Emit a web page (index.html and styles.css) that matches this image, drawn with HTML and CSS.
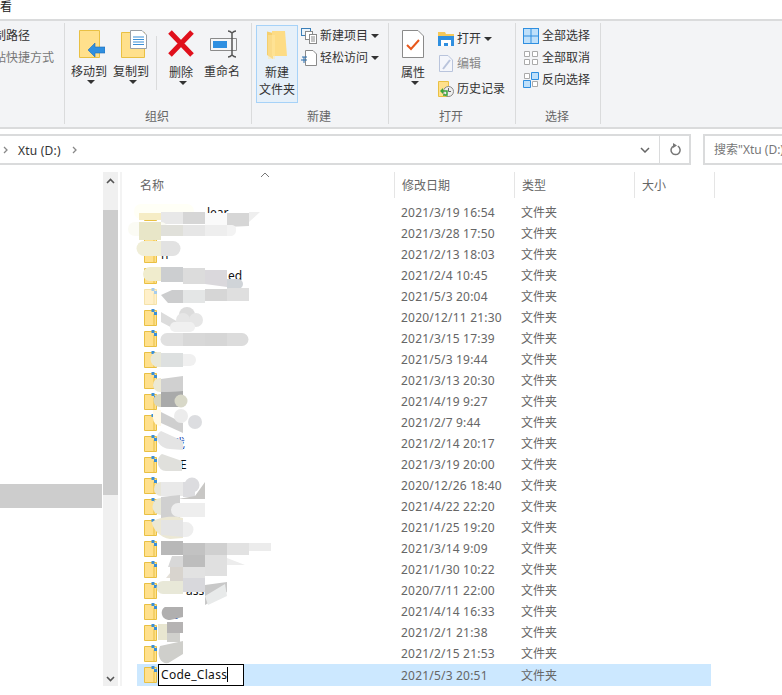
FILE: index.html
```html
<!DOCTYPE html>
<html lang="zh-CN">
<head>
<meta charset="utf-8">
<title>Xtu (D:)</title>
<link rel="stylesheet" href="styles.css">
</head>
<body>
<svg class="defs" width="0" height="0" aria-hidden="true">
  <symbol id="sf" viewBox="0 0 16 18">
    <path d="M1.500 1.500H13.500V16.500H1.500Z" fill="#ffe08c" stroke="#e9c043"/>
    <path d="M11 5V16" stroke="#e9c043"/>
    <rect x="8.500" y="0" width="3" height="3" fill="#3b8fd6"/>
    <rect x="11" y="3" width="3" height="3" fill="#3b8fd6"/>
  </symbol>
</svg>
<div class="page">
  <div class="tabs"><span class="tab-cut">查看</span></div>
  <div class="ribbon">
    <section class="group g-clip">
      <div class="clip-lines">
        <span class="clip-a">复制路径</span>
        <span class="clip-b">粘贴快捷方式</span>
      </div>
      <div class="g-label"></div>
    </section>
    <section class="group g-org">
      <div class="g-body">
        <button class="big w-40">
          <svg class="ico-big" width="32" height="28" viewBox="0 0 32 28"><path d="M6.500 .5H26.500V27.500H6.500Z" fill="#ffe08c" stroke="#e9c043"/><path d="M15 20L22 13V17H32V23H22V27Z" fill="#2f8fe0" stroke="#1e6db5" stroke-width=".6"/></svg>
          <span class="big-t">移动到</span><i class="caret"></i>
        </button>
        <button class="big w-40 ml-2">
          <svg class="ico-big" width="32" height="28" viewBox="0 0 32 28"><path d="M6.500 2.500H29.500V27.500H6.500Z" fill="#ffe08c" stroke="#e9c043"/><path d="M15.500 .5H27L31.500 5V18.500H15.500Z" fill="#fff" stroke="#9aa0a6"/><path d="M18 7H29M18 9.500H29M18 12H29M18 14.500H29" stroke="#3b8fd6"/></svg>
          <span class="big-t">复制到</span><i class="caret"></i>
        </button>
        <i class="vsep"></i>
        <button class="big w-40">
          <svg class="ico-big" width="28" height="28" viewBox="0 0 28 28"><path d="M3 2L25 25M25 2L3 25" stroke="#e0101c" stroke-width="5"/></svg>
          <span class="big-t t-low">删除</span><i class="caret"></i>
        </button>
        <button class="big w-42">
          <svg class="ico-big ico-shift" width="30" height="28" viewBox="0 0 30 28"><path d="M1.500 8.500H27.500V20.500H1.500Z" fill="#f5f6f7" stroke="#8a8a8a"/><rect x="4" y="11" width="14" height="7" fill="#2f8fe0"/><path d="M19 1C21 1 22 2 23 3C24 2 25 1 27 1M23 3V25M19 27C21 27 22 26 23 25C24 26 25 27 27 27" fill="none" stroke="#555" stroke-width="1.500"/></svg>
          <span class="big-t">重命名</span>
        </button>
      </div>
      <div class="g-label">组织</div>
    </section>
    <section class="group g-new">
      <div class="g-body">
        <button class="big new-btn">
          <svg class="ico-big" width="20" height="28" viewBox="0 0 20 28"><path d="M0 0.500L6 2V28L0 24Z" fill="#f5cf6e"/><path d="M5 0H18L20 25H5Z" fill="#fddc85"/><path d="M1 4H8V28H1Z" fill="#ffe7a3" opacity=".5"/></svg>
          <span class="big-t">新建<br>文件夹</span>
        </button>
        <div class="small-col">
          <div class="small"><svg width="16" height="16" viewBox="0 0 16 16"><rect x=".5" y=".5" width="9" height="7" fill="#eaf3fb" stroke="#3b7fb8"/><rect x="4.500" y="3.500" width="7" height="8" fill="#fff" stroke="#8a8a8a"/><rect x="8.500" y="6.500" width="7" height="9" fill="#fff" stroke="#8a8a8a"/><path d="M10 9H14M10 11H14M10 13H14" stroke="#8a8a8a"/></svg><span>新建项目</span><i class="caret c-inline"></i></div>
          <div class="small"><svg width="16" height="16" viewBox="0 0 16 16"><path d="M4.500 .5H12L15.500 4V15.500H4.500Z" fill="#fff" stroke="#8a8a8a"/><path d="M1 7H6M0 10H6M3 7V13" stroke="#2b6fad" fill="none"/></svg><span>轻松访问</span><i class="caret c-inline"></i></div>
        </div>
      </div>
      <div class="g-label">新建</div>
    </section>
    <section class="group g-open">
      <div class="g-body">
        <button class="big w-42">
          <svg class="ico-big" width="22" height="28" viewBox="0 0 22 28"><path d="M.5 .5H16L21.500 6V27.500H.5Z" fill="#fff" stroke="#8a8a8a"/><path d="M5 15L9 19L17 10" fill="none" stroke="#e8581c" stroke-width="2"/></svg>
          <span class="big-t t-low">属性</span><i class="caret"></i>
        </button>
        <div class="small-col open-col">
          <div class="small"><svg width="16" height="16" viewBox="0 0 16 16"><path d="M0 1H7L8 3H16V15H0Z" fill="#f6c858"/><path d="M0 5H16V15H0Z" fill="#2f8fe0"/><path d="M3 15V9H13V15H10V12H6V15Z" fill="#fff"/></svg><span>打开</span><i class="caret c-inline"></i></div>
          <div class="small dim"><svg width="16" height="18" viewBox="0 0 16 18"><path d="M1.500 .5H10L14.500 5V16.500H1.500Z" fill="#f4f6fb" stroke="#b9c4dc"/><path d="M5 14L12 5" stroke="#b9c4dc" stroke-width="2"/></svg><span>编辑</span></div>
          <div class="small"><svg width="16" height="16" viewBox="0 0 16 16"><path d="M.5 .5H10.500V15.500H.5Z" fill="#ffe08c" stroke="#e9c043"/><circle cx="10.500" cy="10.500" r="5" fill="#eee" stroke="#888"/><path d="M10.500 7V10.500H13" fill="none" stroke="#666"/><path d="M2 10L5 7V13Z" fill="#3aa53a"/><path d="M4 10H9V14H5" fill="none" stroke="#3aa53a" stroke-width="1.500"/></svg><span>历史记录</span></div>
        </div>
      </div>
      <div class="g-label">打开</div>
    </section>
    <section class="group g-sel">
      <div class="g-body">
        <div class="small-col sel-col">
          <div class="small"><svg width="16" height="16" viewBox="0 0 16 16"><rect width="16" height="16" fill="#2f8fe0"/><path d="M1 1H7.500V7.500H1ZM8.500 1H15V7.500H8.500ZM1 8.500H7.500V15H1ZM8.500 8.500H15V15H8.500Z" fill="#bfe0fa"/></svg><span>全部选择</span></div>
          <div class="small"><svg width="16" height="16" viewBox="0 0 16 16"><path d="M1.500 1.500H6.500V6.500H1.500ZM9.500 1.500H14.500V6.500H9.500ZM1.500 9.500H6.500V14.500H1.500ZM9.500 9.500H14.500V14.500H9.500Z" fill="#fff" stroke="#aaa"/></svg><span>全部取消</span></div>
          <div class="small"><svg width="16" height="16" viewBox="0 0 16 16"><path d="M1.500 1.500H6.500V6.500H1.500ZM9.500 9.500H14.500V14.500H9.500Z" fill="#fff" stroke="#aaa"/><path d="M8.500 .5H15.500V7.500H8.500ZM.5 8.500H7.500V15.500H.5Z" fill="#bfe0fa" stroke="#2f8fe0"/></svg><span>反向选择</span></div>
        </div>
      </div>
      <div class="g-label">选择</div>
    </section>
  </div>

  <div class="address">
    <div class="addr-box">
      <svg class="chev" width="5" height="8" viewBox="0 0 5 8"><path d="M1 1L4 4L1 7" fill="none" stroke="#888" stroke-width="1.300"/></svg>
      <span class="addr-t">Xtu (D:)</span>
      <svg class="chev" width="5" height="8" viewBox="0 0 5 8"><path d="M1 1L4 4L1 7" fill="none" stroke="#888" stroke-width="1.300"/></svg>
      <svg class="addr-down" width="10" height="6" viewBox="0 0 10 6"><path d="M1 1L5 5L9 1" fill="none" stroke="#666" stroke-width="1.500"/></svg>
      <span class="addr-refresh"><svg width="12" height="13" viewBox="0 0 12 13"><path d="M7.800 3.200A4.500 4.500 0 1 1 4 2.900" fill="none" stroke="#777" stroke-width="1.500"/><path d="M3 0V5L7 2.500Z" fill="#777"/></svg></span>
    </div>
    <div class="search">搜索"Xtu (D:)"</div>
  </div>

  <div class="main">
    <nav class="nav"><div class="nav-sel"></div></nav>
    <div class="vbar">
      <svg class="arrow" width="9" height="6" viewBox="0 0 9 6"><path d="M1 5L4.500 1.500L8 5" fill="none" stroke="#555" stroke-width="1.600"/></svg>
      <div class="vthumb"></div>
      <div class="vfill"></div>
      <svg class="arrow" width="9" height="6" viewBox="0 0 9 6"><path d="M1 1L4.500 4.500L8 1" fill="none" stroke="#555" stroke-width="1.600"/></svg>
    </div>
    <div class="vline"></div>
    <div class="files">
      <div class="head">
        <div class="h-cell h-name">名称<svg class="sort" width="10" height="6" viewBox="0 0 10 6"><path d="M1 5L5 1L9 5" fill="none" stroke="#777"/></svg></div>
        <div class="h-cell">修改日期</div>
        <div class="h-cell">类型</div>
        <div class="h-cell h-size">大小</div>
      </div>
      <div class="rows">
        <div class="row"><span class="n"><svg class="fi"><use href="#sf"/></svg><b class="o46">lear</b></span><span class="d">2021/3/19 16:54</span><span>文件夹</span></div>
        <div class="row"><span class="n"><svg class="fi"><use href="#sf"/></svg></span><span class="d">2021/3/28 17:50</span><span>文件夹</span></div>
        <div class="row"><span class="n"><svg class="fi"><use href="#sf"/></svg><b>n</b></span><span class="d">2021/2/13 18:03</span><span>文件夹</span></div>
        <div class="row"><span class="n"><svg class="fi"><use href="#sf"/></svg><b class="o67">ed</b></span><span class="d">2021/2/4 10:45</span><span>文件夹</span></div>
        <div class="row"><span class="n"><svg class="fi faded"><use href="#sf"/></svg></span><span class="d">2021/5/3 20:04</span><span>文件夹</span></div>
        <div class="row"><span class="n"><svg class="fi"><use href="#sf"/></svg></span><span class="d">2020/12/11 21:30</span><span>文件夹</span></div>
        <div class="row"><span class="n"><svg class="fi"><use href="#sf"/></svg></span><span class="d">2021/3/15 17:39</span><span>文件夹</span></div>
        <div class="row"><span class="n"><svg class="fi"><use href="#sf"/></svg></span><span class="d">2021/5/3 19:44</span><span>文件夹</span></div>
        <div class="row"><span class="n"><svg class="fi"><use href="#sf"/></svg></span><span class="d">2021/3/13 20:30</span><span>文件夹</span></div>
        <div class="row"><span class="n"><svg class="fi"><use href="#sf"/></svg></span><span class="d">2021/4/19 9:27</span><span>文件夹</span></div>
        <div class="row"><span class="n"><svg class="fi"><use href="#sf"/></svg></span><span class="d">2021/2/7 9:44</span><span>文件夹</span></div>
        <div class="row"><span class="n"><svg class="fi"><use href="#sf"/></svg><b class="o12 blue">戏</b></span><span class="d">2021/2/14 20:17</span><span>文件夹</span></div>
        <div class="row"><span class="n"><svg class="fi"><use href="#sf"/></svg><b class="o19">E</b></span><span class="d">2021/3/19 20:00</span><span>文件夹</span></div>
        <div class="row"><span class="n"><svg class="fi"><use href="#sf"/></svg></span><span class="d">2020/12/26 18:40</span><span>文件夹</span></div>
        <div class="row"><span class="n"><svg class="fi"><use href="#sf"/></svg><b class="o7">+</b></span><span class="d">2021/4/22 22:20</span><span>文件夹</span></div>
        <div class="row"><span class="n"><svg class="fi"><use href="#sf"/></svg></span><span class="d">2021/1/25 19:20</span><span>文件夹</span></div>
        <div class="row"><span class="n"><svg class="fi"><use href="#sf"/></svg></span><span class="d">2021/3/14 9:09</span><span>文件夹</span></div>
        <div class="row"><span class="n"><svg class="fi"><use href="#sf"/></svg></span><span class="d">2021/1/30 10:22</span><span>文件夹</span></div>
        <div class="row"><span class="n"><svg class="fi"><use href="#sf"/></svg><b class="o25">ass</b></span><span class="d">2020/7/11 22:00</span><span>文件夹</span></div>
        <div class="row"><span class="n"><svg class="fi"><use href="#sf"/></svg><b class="o14 blue">y</b></span><span class="d">2021/4/14 16:33</span><span>文件夹</span></div>
        <div class="row"><span class="n"><svg class="fi plain"><use href="#sf"/></svg></span><span class="d">2021/2/1 21:38</span><span>文件夹</span></div>
        <div class="row"><span class="n"><svg class="fi"><use href="#sf"/></svg></span><span class="d">2021/2/15 21:53</span><span>文件夹</span></div>
        <div class="row row-sel"><span class="n"><svg class="fi"><use href="#sf"/></svg><span class="rename">Code_Class</span></span><span class="d">2021/5/3 20:51</span><span>文件夹</span></div>
      </div>
    </div>
  </div>

  <svg class="smudges" width="782" height="695" viewBox="0 0 782 695" aria-hidden="true">
    <g>
      <rect x="134" y="204" width="60" height="15" rx="7" fill="#fffff6"/>
      <rect x="139" y="213" width="22" height="7" fill="#f6edc6"/>
      <path d="M161 212H183V224H161Z" fill="#e8e8e8"/><path d="M183 212H205V224H183Z" fill="#d6d6d6"/><path d="M205 213H227V226H205Z" fill="#fafafa"/><path d="M227 213H249V226L227 227Z" fill="#d6d6d6"/><path d="M249 212H260L249 222Z" fill="#efefef"/>
      <rect x="128" y="222" width="40" height="14" rx="7" fill="#fbfbf4"/>
      <path d="M139 222H161V240H139Z" fill="#e8e6c8"/><path d="M161 225H183V236H161Z" fill="#e0e0da"/><path d="M183 225H205V236H183Z" fill="#e6e6e6"/><path d="M205 225H227V236H205Z" fill="#eeeeee"/><path d="M227 225H232A4 4 0 0 1 236 230A6 6 0 0 1 232 236H227Z" fill="#f3f3f3"/>
      <path d="M144 241H161V256H144A7 7 0 0 1 144 241Z" fill="#f0eed8"/><path d="M161 241H173A7.500 7.500 0 0 1 173 256H161Z" fill="#e2e2e2"/>
      <path d="M150 267H161V281H150A7 7 0 0 1 150 267Z" fill="#f0eccd"/><path d="M161 267H183V282H161Z" fill="#ccced0"/><path d="M183 268H205V284H183Z" fill="#dcdcdc"/><path d="M205 270H227V287L205 284Z" fill="#dad8dc"/><path d="M227 279L238 279A5 5 0 0 1 238 289L227 288Z" fill="#d0d4d8"/>
      <path d="M161 295L172 290H183V303H168Z" fill="#cccdce"/><path d="M183 290H205V303H183Z" fill="#e4e6e6"/><path d="M205 289H227V301H205Z" fill="#d6d6d6"/><path d="M227 288H249V301H227Z" fill="#dfdfdf"/>
      <path d="M161 312L178 322V331L161 322Z" fill="#dcdcdc"/><circle cx="187" cy="315" r="8" fill="#dcdcdc"/><circle cx="196" cy="320" r="7" fill="#e6e6e6"/><circle cx="183" cy="320" r="7" fill="#e6e6e6"/><rect x="170" y="322" width="25" height="10" rx="5" fill="#f0f0f0"/>
      <path d="M167 333H183V346H167A6.500 6.500 0 0 1 167 333Z" fill="#e0e0e0"/><path d="M183 333H205V346H183Z" fill="#d8d8d8"/><path d="M205 333H227V346H205Z" fill="#d6d6d6"/><path d="M227 333H242A6.500 6.500 0 0 1 242 346H227Z" fill="#dcdcdc"/>
      <path d="M158 352H161V367H158A7.500 7.500 0 0 1 158 352Z" fill="#e8e8d8"/><path d="M161 353H183V367H161Z" fill="#dde0e0"/><path d="M183 354H190A6 6 0 0 1 190 366H183Z" fill="#f0f0f0"/>
      <path d="M160 378H161V392H160A7 7 0 0 1 160 378Z" fill="#ece9d5"/><path d="M161 379L183 376V391L161 392Z" fill="#d0d0d0"/>
      <path d="M160 394H161V407H160A6.500 6.500 0 0 1 160 394Z" fill="#d8d6c0"/><path d="M161 392L183 391V407H161Z" fill="#a9aaaa"/><circle cx="181" cy="401" r="6.500" fill="#d8d8c8"/>
      <path d="M153 410H161V426A8 8 0 0 1 153 418Z" fill="#fff9e6"/><path d="M161 412L183 423V433L161 423Z" fill="#cfcfcf"/><circle cx="181" cy="416" r="7" fill="#ececec"/><circle cx="195" cy="422" r="7" fill="#dcdde0"/>
      <path d="M161 431L183 441V450L170 449C160 449 152 437 161 431Z" fill="#e4e4e4"/>
      <path d="M162 454L182 461V471H166C157 471 155 458 162 454Z" fill="#e0e0dc"/>
      <path d="M161 482V496A7 7 0 0 1 161 482Z" fill="#e8e6d8"/><path d="M161 482H183V496H161Z" fill="#e9e9e9"/><path d="M183 482H195V497H183Z" fill="#dcdcdf"/><circle cx="192" cy="485" r="7.500" fill="#dcdcdf"/><path d="M195 496L205 482V499H178Z" fill="#c8c7c5"/>
      <path d="M161 498V515A8 8 0 0 1 161 498Z" fill="#e8e8d8"/><path d="M161 497L180 495V518L161 518Z" fill="#d0d0d0"/><path d="M178 503H205V517H178A7 7 0 0 1 178 503Z" fill="#eeeeee"/>
      <path d="M152 522C160 516 175 516 183 518V538L170 539C160 538 152 528 152 522Z" fill="#ece8d4"/><path d="M161 520H183V537L161 535Z" fill="#e4e4e4"/><path d="M183 522H186A6 6 0 0 1 186 537H183Z" fill="#eeeeee"/>
      <path d="M166 541H161V555H166Z" fill="#d9d9d2"/><path d="M161 541H183V555H161Z" fill="#b8b8b8"/><path d="M183 543H205V555H183Z" fill="#c2c2c2"/><path d="M205 543H227V555H205Z" fill="#d0d0d0"/><path d="M227 543H249V555H227Z" fill="#e2e2e2"/><path d="M249 543H271V551H249Z" fill="#ececec"/>
      <path d="M172 556H183V567H168Z" fill="#d8d8d8"/><path d="M183 555H205V567H183Z" fill="#bdbdbd"/><path d="M205 555H227V575H205Z" fill="#e0e0e0"/><path d="M227 558L245 565H227Z" fill="#ededed"/>
      <path d="M175 567H183V578H166Z" fill="#e4e0d8"/><path d="M170 567H183V582H170Z" fill="#d8d4ce"/><path d="M183 567H205V580H183Z" fill="#e2e2e2"/><path d="M205 567H227V576H205Z" fill="#e0e0e0"/>
      <path d="M163 581H183V594H163A6.500 6.500 0 0 1 163 581Z" fill="#e8e8d8"/><path d="M183 578H205V592H183Z" fill="#d8d8dc"/><path d="M205 585L227 582V592L205 605Z" fill="#c8c8c8"/><path d="M205 596L225 584L227 596L208 605Z" fill="#e8eaea"/>
      <path d="M165 607H183V617L170 620C160 620 160 609 165 607Z" fill="#b0afaf"/>
      <path d="M167 622H183V633H167Z" fill="#b5b3b3"/><path d="M158 624H167V640H158Z" fill="#e8e6d0"/><path d="M167 633H180V642H167Z" fill="#d0d0cc"/>
      <path d="M160 646L183 641V654L170 662C165 666 155 660 160 646Z" fill="#cfcfcb"/>
    </g>
  </svg>
</div>
</body>
</html>
```
FILE: styles.css
```css
* { box-sizing: border-box; }
html, body { margin: 0; padding: 0; }
body {
  width: 782px;
  height: 695px;
  overflow: hidden;
  background: #fff;
  color: #444;
  font: 12px/17px "Noto Sans", "Noto Sans CJK SC", sans-serif;
}
.defs { position: absolute; }
.page { position: relative; width: 782px; height: 695px; overflow: hidden; }

.tabs { height: 21px; border-bottom: 2px solid #dadbdc; overflow: hidden; }
.tab-cut { display: block; margin: -2px 0 0 -4px; color: #222; width: 30px; text-indent: -8px; line-height: 17px; }

.ribbon {
  display: flex;
  height: 108px;
  padding: 2px 0 3px;
  background: #f3f4f6;
  border-bottom: 2px solid #dadbdc;
}
.group {
  display: flex;
  flex-direction: column;
  flex: none;
  border-right: 1px solid #dadbdc;
  overflow: hidden;
}
.g-clip { width: 65px; }
.g-org { width: 187px; }
.g-new { width: 137px; }
.g-open { width: 127px; }
.g-sel { width: 85px; }
.g-body { display: flex; height: 84px; flex: none; }
.g-label { height: 18px; padding: 1px 2px 0 0; text-align: center; color: #666; }
.g-clip .g-label { visibility: hidden; }

.clip-lines { display: flex; flex-direction: column; gap: 5px; height: 84px; padding-top: 4px; margin-left: -18px; }
.clip-a { color: #333; white-space: nowrap; }
.clip-b { color: #777; white-space: nowrap; }

.big {
  display: flex;
  flex-direction: column;
  align-items: center;
  padding: 7px 0 0;
  margin: 0;
  border: 0;
  background: none;
  font: inherit;
  color: #333;
  flex: none;
}
.w-40 { width: 40px; }
.w-42 { width: 42px; }
.ml-2 { margin-left: 2px; }
.g-org .g-body { padding-left: 4px; }
.g-open .g-body { padding-left: 3px; }
.ico-big { display: block; flex: none; }
.ico-shift { margin-left: 4px; }
.big-t { margin-top: 5px; }
.t-low { margin-top: 6px; }
.caret {
  display: block;
  width: 0;
  height: 0;
  margin: 0 0 0 4px;
  border: 4px solid transparent;
  border-top-color: #333;
  border-bottom: 0;
}
.c-inline { margin: 0; }
.vsep { width: 1px; height: 54px; margin: 13px 4px 0 5px; background: #dadbdc; flex: none; }

.new-btn {
  width: 42px;
  height: 78px;
  margin: 2px 0 0 4px;
  padding-top: 5px;
  background: #e6f0f9;
  border: 1px solid #a6d2f8;
}
.new-btn .big-t { margin-top: 5px; }
.small-col { display: flex; flex-direction: column; gap: 5px; padding: 4px 0 0 3px; }
.small { display: flex; align-items: center; height: 17px; gap: 3px; color: #333; white-space: nowrap; }
.small svg { flex: none; }
.dim { color: #888; }
.open-col { gap: 8px; padding: 7px 0 0 4px; }
.sel-col { padding: 4px 0 0 7px; }

.address { display: flex; height: 31px; margin-top: 5px; }
.addr-box {
  display: flex;
  align-items: center;
  width: 691px;
  height: 31px;
  padding-left: 3px;
  border: 2px solid #dadbdc;
  border-left: 0;
  color: #333;
  flex: none;
}
.addr-t { margin: 1px 11px 0 10px; letter-spacing: .2px; }
.addr-down { margin-left: auto; }
.addr-refresh {
  display: flex;
  align-items: center;
  justify-content: center;
  width: 30px;
  height: 100%;
  margin-left: 9px;
  padding-left: 3px;
  border-left: 1px solid #dadbdc;
}
.search {
  flex: none;
  width: 79px;
  height: 31px;
  margin-left: 12px;
  padding: 5px 0 0 9px;
  border: 2px solid #dadbdc;
  border-right: 0;
  color: #777;
  white-space: nowrap;
  overflow: hidden;
}

.main { display: flex; height: 530px; }
.nav { width: 103px; flex: none; padding-top: 319px; }
.nav-sel { width: 102px; height: 24px; background: #cdcdcd; }
.vbar {
  display: flex;
  flex-direction: column;
  align-items: center;
  width: 15px;
  height: 514px;
  margin-top: 7px;
  background: #f0f0f0;
  flex: none;
}
.arrow { flex: none; margin: 6px 0 4px; }
.vthumb { align-self: stretch; height: 285px; margin-top: 22px; background: #cdcdcd; }
.vfill { flex: 1; }
.vline { width: 2px; height: 514px; margin: 7px 0 0 2px; background: #f3f3f3; flex: none; }
.files { margin-left: 15px; width: 640px; }
.head { display: flex; height: 26px; margin-top: 7px; }
.h-cell { width: 120px; padding: 5px 0 0 7px; border-right: 1px solid #e5e5e5; color: #666; flex: none; }
.h-name { position: relative; width: 258px; padding-left: 3px; }
.h-size { width: 80px; }
.sort { position: absolute; left: 123px; top: 0; }
.rows { margin-top: 4px; }
.row {
  display: grid;
  grid-template-columns: 264px 120px 190px;
  width: 574px;
  height: 21px;
  align-items: center;
  color: #666;
}
.d { letter-spacing: .2px; }
.row-sel { height: 22px; background: #cce8ff; }
.n { display: flex; align-items: center; padding-left: 6px; color: #111; white-space: nowrap; }
.n b { font-weight: 400; margin-left: 2px; }
.n .o7 { margin-left: 9px; }
.n .o12 { margin-left: 14px; }
.n .o14 { margin-left: 16px; }
.n .o19 { margin-left: 21px; }
.n .o25 { margin-left: 27px; }
.n .o46 { margin-left: 48px; }
.n .o67 { margin-left: 69px; }
.n .blue { color: #1a3fb0; }
.fi { width: 16px; height: 18px; flex: none; }
.faded { opacity: .45; }
.rename {
  display: block;
  width: 86px;
  height: 22px;
  margin-left: -1px;
  padding: 0 0 0 2px;
  background: #fff;
  border: 1px solid #000;
  color: #111;
  letter-spacing: .3px;
  line-height: 20px;
}
.rename::after { content: ""; display: inline-block; width: 1px; height: 15px; background: #000; vertical-align: -3px; }
.smudges { position: absolute; left: 0; top: 0; pointer-events: none; }
```
